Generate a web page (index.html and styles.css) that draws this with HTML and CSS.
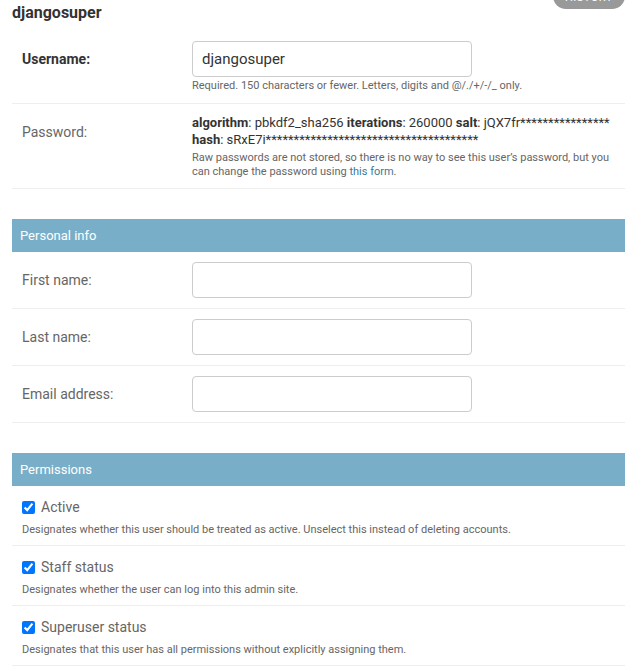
FILE: index.html
```html
<!DOCTYPE html>
<html lang="en">
<head>
<meta charset="utf-8">
<title>Change user | Django site admin</title>
<link rel="stylesheet" href="styles.css">
</head>
<body>
<div class="content">
  <div class="subtitle-row">
    <h2 class="subtitle">djangosuper</h2>
    <a class="historylink" href="#">History</a>
  </div>

  <fieldset class="module first">
    <div class="form-row">
      <label class="field-label required" for="id_username">Username:</label>
      <div class="field-box">
        <input class="text-input" type="text" id="id_username" value="djangosuper">
        <div class="help">Required. 150 characters or fewer. Letters, digits and @/./+/-/_ only.</div>
      </div>
    </div>
    <div class="form-row password-row">
      <label class="field-label">Password:</label>
      <div class="field-box">
        <div class="readonly"><strong>algorithm</strong>: pbkdf2_sha256 <strong>iterations</strong>: 260000 <strong>salt</strong>: jQX7fr**************** <strong>hash</strong>: sRxE7i**************************************</div>
        <div class="help">Raw passwords are not stored, so there is no way to see this user’s password, but you can change the password using <a href="#">this form</a>.</div>
      </div>
    </div>
  </fieldset>

  <fieldset class="module">
    <h2 class="module-title">Personal info</h2>
    <div class="form-row">
      <label class="field-label" for="id_first_name">First name:</label>
      <div class="field-box"><input class="text-input" type="text" id="id_first_name"></div>
    </div>
    <div class="form-row">
      <label class="field-label" for="id_last_name">Last name:</label>
      <div class="field-box"><input class="text-input" type="text" id="id_last_name"></div>
    </div>
    <div class="form-row">
      <label class="field-label" for="id_email">Email address:</label>
      <div class="field-box"><input class="text-input" type="text" id="id_email"></div>
    </div>
  </fieldset>

  <fieldset class="module">
    <h2 class="module-title">Permissions</h2>
    <div class="form-row check-row">
      <div class="checkbox-line">
        <input type="checkbox" id="id_is_active" checked>
        <label class="check-label" for="id_is_active">Active</label>
      </div>
      <div class="help">Designates whether this user should be treated as active. Unselect this instead of deleting accounts.</div>
    </div>
    <div class="form-row check-row">
      <div class="checkbox-line">
        <input type="checkbox" id="id_is_staff" checked>
        <label class="check-label" for="id_is_staff">Staff status</label>
      </div>
      <div class="help">Designates whether the user can log into this admin site.</div>
    </div>
    <div class="form-row check-row">
      <div class="checkbox-line">
        <input type="checkbox" id="id_is_superuser" checked>
        <label class="check-label" for="id_is_superuser">Superuser status</label>
      </div>
      <div class="help">Designates that this user has all permissions without explicitly assigning them.</div>
    </div>
  </fieldset>
</div>
</body>
</html>
```

FILE: styles.css
```css
* { box-sizing: border-box; }

html, body {
  margin: 0;
  padding: 0;
  background: #fff;
}

body {
  font-family: Roboto, "Liberation Sans", Arial, sans-serif;
  font-size: 14px;
  color: #333;
}

.content {
  padding: 0 19px 40px 12px;
}

.subtitle-row {
  display: flex;
  justify-content: space-between;
  align-items: flex-start;
}

.subtitle {
  margin: 0;
  padding-top: 3px;
  font-size: 16px;
  line-height: 20px;
  font-weight: 700;
  color: #333;
}

.historylink {
  display: block;
  width: 72px;
  height: 26px;
  margin-top: -17px;
  border-radius: 15px;
  background: #999;
  color: #fff;
  text-decoration: none;
  text-transform: uppercase;
  font-size: 11px;
  letter-spacing: 0.5px;
  line-height: 29px;
  text-align: center;
  overflow: hidden;
}

fieldset.module {
  margin: 0 0 30px 0;
  padding: 0;
  border: 0;
  min-width: 0;
}

fieldset.module.first {
  margin-top: 8px;
}

.module-title {
  margin: 0;
  padding: 8px;
  background: #79aec8;
  color: #fff;
  font-size: 13px;
  line-height: 17px;
  font-weight: 400;
}

.form-row {
  display: flex;
  padding: 10px;
  border-bottom: 1px solid #eee;
}

.field-label {
  width: 170px;
  flex: none;
  padding-top: 10px;
  line-height: 16px;
  font-size: 14px;
  color: #666;
}

.field-label.required {
  font-weight: 700;
  color: #333;
}

.field-box {
  flex: 1;
  min-width: 0;
}

.text-input {
  display: block;
  margin: 0;
  width: 280px;
  height: 36px;
  padding: 0 9px;
  border: 1px solid #ccc;
  border-radius: 4px;
  font-family: Roboto, "Liberation Sans", Arial, sans-serif;
  font-size: 15px;
  color: #333;
  background: #fff;
}

.help {
  margin-top: 2px;
  font-size: 11px;
  line-height: 14px;
  color: #666;
}

.help a {
  color: #417893;
  text-decoration: none;
}

.password-row {
  padding-bottom: 9px;
}

.password-row .help {
  margin-top: 3px;
}

.readonly {
  font-size: 13px;
  line-height: 17px;
  color: #333;
  word-break: break-all;
}

.readonly strong {
  font-weight: 700;
}

.check-row {
  display: block;
  padding-top: 11px;
  padding-bottom: 9px;
}

.checkbox-line {
  display: flex;
  align-items: center;
  height: 20px;
}

.checkbox-line input {
  margin: 0;
  width: 13px;
  height: 13px;
}

.check-label {
  padding-left: 6px;
  font-size: 14px;
  line-height: 20px;
  color: #666;
}

.check-row .help {
  margin-top: 6px;
  line-height: 13px;
}
```
